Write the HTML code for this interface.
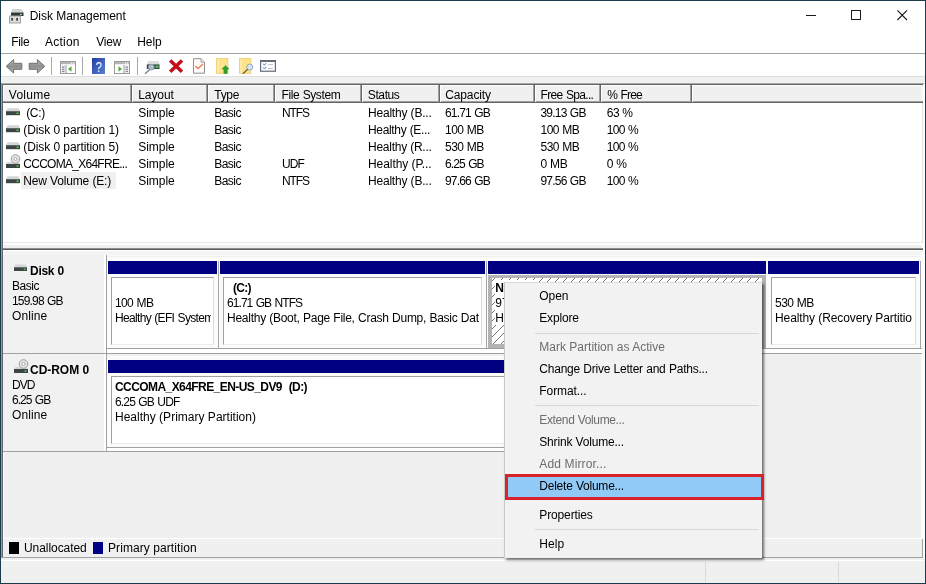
<!DOCTYPE html>
<html lang="en">
<head>
<meta charset="utf-8">
<title>Disk Management</title>
<style>
html,body{margin:0;padding:0;}
body{width:926px;height:584px;overflow:hidden;background:#fff;font-family:"Liberation Sans",sans-serif;font-size:12px;color:#000;position:relative;}
.a{position:absolute;}
.t{position:absolute;white-space:pre;line-height:14px;height:14px;z-index:5;}
.b{font-weight:bold;}
.g{color:#6d6d6d;}
.m{z-index:30;}
</style>
</head>
<body>
<div class="a" style="left:0;top:0;width:926px;height:584px;box-sizing:border-box;border:1px solid #1c3b4c;background:#fff;"></div>
<svg class="a" style="left:8px;top:7.5px" width="18" height="16" viewBox="0 0 18 16">
 <polygon points="4.5,1 13.5,1 15.5,4.5 3,4.5" fill="#cfd3d5"/>
 <rect x="3" y="4.5" width="12.5" height="3.5" fill="#2b3a36"/>
 <rect x="12.3" y="5.8" width="1.4" height="1.2" fill="#fff"/>
 <rect x="1.5" y="8" width="11" height="7" fill="#dcdcdc" stroke="#a3a3a3" stroke-width="1"/>
 <rect x="3.3" y="10" width="1.6" height="2.6" fill="#2a2a2a"/>
 <rect x="8.3" y="10" width="1.6" height="2.6" fill="#2a2a2a"/>
</svg>
<div class="a" style="left:806px;top:15px;width:10px;height:1px;background:#1a1a1a;"></div>
<div class="a" style="left:851px;top:10px;width:8px;height:8px;border:1px solid #1a1a1a;box-sizing:content-box;"></div>
<svg class="a" style="left:897px;top:10px" width="11" height="11" viewBox="0 0 11 11"><path d="M0.4 0.4 L10 10 M10 0.4 L0.4 10" stroke="#1a1a1a" stroke-width="1.1" fill="none"/></svg>
<div class="a" style="left:1px;top:53px;width:924px;height:1px;background:#a3a3a3;"></div>
<div class="a" style="left:51px;top:57px;width:1px;height:18px;background:#a8a8a8;"></div>
<div class="a" style="left:82px;top:57px;width:1px;height:18px;background:#a8a8a8;"></div>
<div class="a" style="left:137px;top:57px;width:1px;height:18px;background:#a8a8a8;"></div>
<svg class="a" style="left:5px;top:58px" width="42" height="17" viewBox="0 0 42 17">
 <defs><linearGradient id="ga" x1="0" y1="0" x2="0" y2="1"><stop offset="0" stop-color="#b8b8b8"/><stop offset="0.5" stop-color="#8e8e8e"/><stop offset="1" stop-color="#b4b4b4"/></linearGradient></defs>
 <path d="M1.2 8.3 L8.6 1.6 L8.6 5.3 L16.8 5.3 L16.8 11.3 L8.6 11.3 L8.6 15 Z" fill="url(#ga)" stroke="#707070" stroke-width="1" stroke-linejoin="round"/>
 <path d="M39.8 8.3 L32.4 1.6 L32.4 5.3 L24.2 5.3 L24.2 11.3 L32.4 11.3 L32.4 15 Z" fill="url(#ga)" stroke="#707070" stroke-width="1" stroke-linejoin="round"/>
</svg>
<svg class="a" style="left:60px;top:61px" width="16" height="13" viewBox="0 0 16 13">
 <rect x="0.5" y="0.5" width="15" height="12" fill="#fdfdfd" stroke="#9a9a9a"/>
 <rect x="1" y="1" width="14" height="2.2" fill="#b5b5b5"/>
 <rect x="11" y="1.5" width="1.2" height="1.2" fill="#fff"/><rect x="13" y="1.5" width="1.2" height="1.2" fill="#fff"/>
 <rect x="1" y="4" width="4.5" height="8" fill="#f3f4f6"/>
 <rect x="2" y="5.5" width="2.5" height="1.2" fill="#7a8696"/><rect x="2" y="7.7" width="2.5" height="1.2" fill="#7a8696"/><rect x="2" y="9.9" width="2.5" height="1.2" fill="#7a8696"/>
 <rect x="5.5" y="4" width="1" height="8" fill="#9a9a9a"/>
 <polygon points="8,8 11.5,5.3 11.5,10.7" fill="#4faa3a"/>
</svg>
<svg class="a" style="left:92px;top:58px" width="13" height="16" viewBox="0 0 13 16">
 <defs><linearGradient id="gh" x1="0" y1="0" x2="1" y2="1"><stop offset="0" stop-color="#1f3f9e"/><stop offset="1" stop-color="#5d7fd6"/></linearGradient></defs>
 <rect x="0" y="0" width="13" height="16" fill="url(#gh)"/>
 <text x="6.6" y="13.6" font-family="Liberation Sans, sans-serif" font-size="15.5" fill="#fff" text-anchor="middle" textLength="6.4" lengthAdjust="spacingAndGlyphs">?</text>
</svg>
<svg class="a" style="left:114px;top:61px" width="16" height="13" viewBox="0 0 16 13">
 <rect x="0.5" y="0.5" width="15" height="12" fill="#fdfdfd" stroke="#9a9a9a"/>
 <rect x="1" y="1" width="14" height="2.2" fill="#b5b5b5"/>
 <rect x="11" y="1.5" width="1.2" height="1.2" fill="#fff"/><rect x="13" y="1.5" width="1.2" height="1.2" fill="#fff"/>
 <rect x="10.5" y="4" width="4.5" height="8" fill="#f3f4f6"/>
 <rect x="11.5" y="5.5" width="2.5" height="1.2" fill="#7a8696"/><rect x="11.5" y="7.7" width="2.5" height="1.2" fill="#7a8696"/><rect x="11.5" y="9.9" width="2.5" height="1.2" fill="#7a8696"/>
 <rect x="9.5" y="4" width="1" height="8" fill="#9a9a9a"/>
 <polygon points="8,8 4.5,5.3 4.5,10.7" fill="#4faa3a"/>
</svg>
<svg class="a" style="left:144px;top:60px" width="18" height="15" viewBox="0 0 18 15">
 <polygon points="4.2,1 14.8,1 15.5,4.4 2.8,4.4" fill="#d9dddd"/>
 <rect x="2.8" y="4.4" width="12.7" height="4.6" fill="#2f473c"/>
 <rect x="4.5" y="5.8" width="1.6" height="1.8" fill="#cfd6d6"/><rect x="7.4" y="5.8" width="1.6" height="1.8" fill="#cfd6d6"/>
 <rect x="11.3" y="5.6" width="3.3" height="2.2" fill="#3fae46"/><rect x="12.5" y="6.2" width="1" height="1" fill="#e8ffe8"/>
 <circle cx="7.3" cy="7.2" r="2.9" fill="#b9ccd9" fill-opacity="0.85" stroke="#8496a4" stroke-width="0.9"/>
 <path d="M5.4 9.8 L1.4 13.4" stroke="#76858f" stroke-width="1.4" stroke-linecap="round"/>
</svg>
<svg class="a" style="left:168px;top:59px" width="16" height="15" viewBox="0 0 16 15">
 <path d="M2.2 1.6 L14 12.8 M14 1.6 L2.2 12.8" stroke="#c30f1a" stroke-width="3.5" stroke-linecap="butt"/>
</svg>
<svg class="a" style="left:192px;top:58px" width="14" height="17" viewBox="0 0 14 17">
 <path d="M1.5 0.7 L9 0.7 L12.5 4.2 L12.5 15.2 L1.5 15.2 Z" fill="#fffaf8" stroke="#8e8e8e" stroke-width="1"/>
 <path d="M9 0.7 L9 4.2 L12.5 4.2" fill="#ececec" stroke="#8e8e8e" stroke-width="0.8"/>
 <path d="M3.4 8 L6 10.5 L11 6" fill="none" stroke="#e57f55" stroke-width="1.4"/>
</svg>
<svg class="a" style="left:216px;top:58px" width="15" height="17" viewBox="0 0 15 17">
 <rect x="0.5" y="0.5" width="11.3" height="14.8" fill="#fde38c" stroke="#eed27c" stroke-width="1"/>
 <rect x="1" y="1" width="2" height="13.8" fill="#fdeaa8"/>
 <path d="M9.5 7.4 L13 11 L11.2 11 L11.2 15.4 L7.9 15.4 L7.9 11 L6 11 Z" fill="#2fa32b" stroke="#238a21" stroke-width="0.5"/>
</svg>
<svg class="a" style="left:239px;top:58px" width="16" height="17" viewBox="0 0 16 17">
 <rect x="0.5" y="0.5" width="11.3" height="14.8" fill="#fde38c" stroke="#eed27c" stroke-width="1"/>
 <rect x="1" y="1" width="2" height="13.8" fill="#fdeaa8"/>
 <circle cx="10.7" cy="9.1" r="3" fill="#d6e5f0" stroke="#98a8b8" stroke-width="1"/>
 <path d="M8.4 11.6 L4.2 15.4" stroke="#6c6048" stroke-width="1.3" stroke-linecap="round"/>
</svg>
<svg class="a" style="left:260px;top:60px" width="17" height="13" viewBox="0 0 17 13">
 <rect x="0.6" y="0.6" width="14.8" height="10.6" fill="#fff" stroke="#606a78" stroke-width="1.2"/>
 <rect x="0" y="0" width="16" height="2" fill="#606a78"/>
 <path d="M3.2 3.6 L4.4 5.2 L6 3.2" fill="none" stroke="#3a7ac8" stroke-width="1"/>
 <path d="M3.2 7.4 L4.4 9 L6 7" fill="none" stroke="#3a7ac8" stroke-width="1"/>
 <rect x="8" y="4.2" width="5" height="0.9" fill="#b0b8c0"/><rect x="8" y="8" width="5" height="0.9" fill="#b0b8c0"/>
</svg>
<div class="a" style="left:1px;top:76px;width:924px;height:1px;background:#dedede;"></div>
<div class="a" style="left:1px;top:77px;width:924px;height:7px;background:#f0f0f0;"></div>
<div class="a" style="left:1px;top:83px;width:923px;height:1px;background:#a9a9a9;"></div>
<div class="a" style="left:1px;top:83px;width:1px;height:475px;background:#8a9dab;"></div>
<div class="a" style="left:2px;top:84px;width:921px;height:1px;background:#646464;"></div>
<div class="a" style="left:2px;top:84px;width:1px;height:474px;background:#60686d;"></div>
<div class="a" style="left:3px;top:85px;width:919px;height:160px;background:#ffffff;"></div>
<div class="a" style="left:3px;top:242px;width:919px;height:1px;background:#e8e8e8;"></div>
<div class="a" style="left:922px;top:85px;width:1px;height:158px;background:#e3e3e3;"></div>
<div class="a" style="left:923px;top:84px;width:2px;height:474px;background:#ffffff;"></div>
<div class="a" style="left:3px;top:85px;width:919px;height:1px;background:#ffffff;"></div>
<div class="a" style="left:3px;top:86px;width:919px;height:15px;background:#f0f0f0;"></div>
<div class="a" style="left:3px;top:85px;width:1px;height:17px;background:#ffffff;"></div>
<div class="a" style="left:3px;top:101px;width:920px;height:1px;background:#a0a0a0;"></div>
<div class="a" style="left:3px;top:102px;width:920px;height:1px;background:#646464;"></div>
<div class="a" style="left:130px;top:85px;width:1px;height:17px;background:#a0a0a0;"></div>
<div class="a" style="left:131px;top:85px;width:1px;height:17px;background:#696969;"></div>
<div class="a" style="left:132px;top:85px;width:1px;height:17px;background:#ffffff;"></div>
<div class="a" style="left:206px;top:85px;width:1px;height:17px;background:#a0a0a0;"></div>
<div class="a" style="left:207px;top:85px;width:1px;height:17px;background:#696969;"></div>
<div class="a" style="left:208px;top:85px;width:1px;height:17px;background:#ffffff;"></div>
<div class="a" style="left:273px;top:85px;width:1px;height:17px;background:#a0a0a0;"></div>
<div class="a" style="left:274px;top:85px;width:1px;height:17px;background:#696969;"></div>
<div class="a" style="left:275px;top:85px;width:1px;height:17px;background:#ffffff;"></div>
<div class="a" style="left:360px;top:85px;width:1px;height:17px;background:#a0a0a0;"></div>
<div class="a" style="left:361px;top:85px;width:1px;height:17px;background:#696969;"></div>
<div class="a" style="left:362px;top:85px;width:1px;height:17px;background:#ffffff;"></div>
<div class="a" style="left:438px;top:85px;width:1px;height:17px;background:#a0a0a0;"></div>
<div class="a" style="left:439px;top:85px;width:1px;height:17px;background:#696969;"></div>
<div class="a" style="left:440px;top:85px;width:1px;height:17px;background:#ffffff;"></div>
<div class="a" style="left:533px;top:85px;width:1px;height:17px;background:#a0a0a0;"></div>
<div class="a" style="left:534px;top:85px;width:1px;height:17px;background:#696969;"></div>
<div class="a" style="left:535px;top:85px;width:1px;height:17px;background:#ffffff;"></div>
<div class="a" style="left:599px;top:85px;width:1px;height:17px;background:#a0a0a0;"></div>
<div class="a" style="left:600px;top:85px;width:1px;height:17px;background:#696969;"></div>
<div class="a" style="left:601px;top:85px;width:1px;height:17px;background:#ffffff;"></div>
<div class="a" style="left:690px;top:85px;width:1px;height:17px;background:#a0a0a0;"></div>
<div class="a" style="left:691px;top:85px;width:1px;height:17px;background:#696969;"></div>
<div class="a" style="left:692px;top:85px;width:1px;height:17px;background:#ffffff;"></div>
<div class="a" style="left:921px;top:86px;width:2px;height:15px;background:#f7f7f7;"></div>
<div class="a" style="left:21px;top:172px;width:95px;height:17px;background:#f0f0f0;"></div>
<svg class="a" style="left:6px;top:108px" width="14" height="8" viewBox="0 0 14 8">
 <polygon points="1.5,0.3 12.5,0.3 14,3.2 0,3.2" fill="#d3d6d8"/>
 <rect x="0" y="3.2" width="14" height="4" fill="#3b4644"/>
 <rect x="10.5" y="4.5" width="2" height="1.5" fill="#50d050"/>
</svg>
<svg class="a" style="left:6px;top:125px" width="14" height="8" viewBox="0 0 14 8">
 <polygon points="1.5,0.3 12.5,0.3 14,3.2 0,3.2" fill="#d3d6d8"/>
 <rect x="0" y="3.2" width="14" height="4" fill="#3b4644"/>
 <rect x="10.5" y="4.5" width="2" height="1.5" fill="#50d050"/>
</svg>
<svg class="a" style="left:6px;top:142px" width="14" height="8" viewBox="0 0 14 8">
 <polygon points="1.5,0.3 12.5,0.3 14,3.2 0,3.2" fill="#d3d6d8"/>
 <rect x="0" y="3.2" width="14" height="4" fill="#3b4644"/>
 <rect x="10.5" y="4.5" width="2" height="1.5" fill="#50d050"/>
</svg>
<svg class="a" style="left:6px;top:154px" width="15" height="15" viewBox="0 0 15 15">
 <polygon points="1.5,8 12.5,8 14,10 0,10" fill="#d3d6d8"/>
 <rect x="0" y="10" width="14" height="4" fill="#3b4644"/>
 <rect x="10.5" y="11.3" width="2" height="1.4" fill="#50d050"/>
 <circle cx="9.5" cy="5" r="4.3" fill="#e4e4e4" stroke="#9c9c9c" stroke-width="1"/>
 <circle cx="9.5" cy="5" r="1.5" fill="#fff" stroke="#9c9c9c" stroke-width="0.8"/>
</svg>
<svg class="a" style="left:6px;top:176px" width="14" height="8" viewBox="0 0 14 8">
 <polygon points="1.5,0.3 12.5,0.3 14,3.2 0,3.2" fill="#d3d6d8"/>
 <rect x="0" y="3.2" width="14" height="4" fill="#3b4644"/>
 <rect x="10.5" y="4.5" width="2" height="1.5" fill="#50d050"/>
</svg>
<div class="a" style="left:4px;top:245px;width:918px;height:3px;background:#f0f0f0;"></div>
<div class="a" style="left:3px;top:248px;width:920px;height:1px;background:#909090;"></div>
<div class="a" style="left:3px;top:249px;width:920px;height:1px;background:#5a5a5a;"></div>
<div class="a" style="left:3px;top:250px;width:919px;height:308px;background:#ffffff;"></div>
<div class="a" style="left:4px;top:251px;width:917px;height:306px;background:#f0f0f0;"></div>
<div class="a" style="left:4px;top:251px;width:917px;height:4px;background:#f4f4f4;"></div>
<div class="a" style="left:4px;top:255px;width:917px;height:1px;background:#fafafa;"></div>
<div class="a" style="left:921px;top:250px;width:3px;height:308px;background:#fbfbfb;"></div>
<div class="a" style="left:2px;top:557px;width:921px;height:1px;background:#a0a0a0;"></div>
<div class="a" style="left:3px;top:255px;width:101px;height:98px;background:#f1f1f1;"></div>
<div class="a" style="left:104px;top:255px;width:2px;height:98px;background:#ffffff;"></div>
<div class="a" style="left:106px;top:255px;width:1px;height:98px;background:#a0a0a0;"></div>
<div class="a" style="left:3px;top:353px;width:104px;height:1px;background:#a0a0a0;"></div>
<div class="a" style="left:107px;top:257px;width:814px;height:92px;background:#fbfbfb;"></div>
<div class="a" style="left:108px;top:261px;width:109px;height:13px;background:#000080;"></div>
<div class="a" style="left:108px;top:274px;width:109px;height:74px;background:#fbfbfb;"></div>
<div class="a" style="left:111px;top:277px;width:103px;height:68px;background:#fff;border:1px solid #a0a0a0;border-right-color:#dcdcdc;border-bottom-color:#ececec;box-sizing:border-box;"></div>
<div class="a" style="left:218px;top:261px;width:1px;height:87px;background:#a6a6a6;"></div>
<div class="a" style="left:220px;top:261px;width:265px;height:13px;background:#000080;"></div>
<div class="a" style="left:220px;top:274px;width:265px;height:74px;background:#fbfbfb;"></div>
<div class="a" style="left:223px;top:277px;width:259px;height:68px;background:#fff;border:1px solid #a0a0a0;border-right-color:#dcdcdc;border-bottom-color:#ececec;box-sizing:border-box;"></div>
<div class="a" style="left:486px;top:261px;width:1px;height:87px;background:#a6a6a6;"></div>
<div class="a" style="left:488px;top:261px;width:278px;height:13px;background:#000080;"></div>
<div class="a" style="left:488px;top:274px;width:278px;height:74px;background:#fbfbfb;"></div>
<div class="a" style="left:488px;top:275px;width:278px;height:73px;background:#fff;border:4px solid #b3b3b3;border-top-width:3px;box-sizing:border-box;"></div>
<svg class="a" style="left:492px;top:278px" width="270" height="66"><defs><pattern id="hat" width="8" height="8" patternUnits="userSpaceOnUse"><path d="M-1 4 L4 -1 M2 9 L9 2" stroke="#4a4a4a" stroke-width="0.75"/></pattern></defs><rect width="100%" height="100%" fill="url(#hat)"/></svg>
<div class="a" style="left:494.5px;top:280px;width:40px;height:45px;background:#ffffff;"></div>
<div class="a" style="left:768px;top:261px;width:151px;height:13px;background:#000080;"></div>
<div class="a" style="left:768px;top:274px;width:151px;height:74px;background:#fbfbfb;"></div>
<div class="a" style="left:771px;top:277px;width:145px;height:68px;background:#fff;border:1px solid #a0a0a0;border-right-color:#dcdcdc;border-bottom-color:#ececec;box-sizing:border-box;"></div>
<div class="a" style="left:920px;top:261px;width:1px;height:87px;background:#a6a6a6;"></div>
<div class="a" style="left:107px;top:348px;width:815px;height:1px;background:#a0a0a0;"></div>
<div class="a" style="left:107px;top:349px;width:815px;height:4px;background:#ffffff;"></div>
<div class="a" style="left:107px;top:353px;width:815px;height:1px;background:#a0a0a0;"></div>
<svg class="a" style="left:14.3px;top:264.3px" width="13" height="8" viewBox="0 0 14 8">
 <polygon points="1.5,0.3 12.5,0.3 14,3.2 0,3.2" fill="#d3d6d8"/>
 <rect x="0" y="3.2" width="14" height="4" fill="#3b4644"/>
 <rect x="10.5" y="4.5" width="2" height="1.5" fill="#50d050"/>
</svg>
<div class="a" style="left:3px;top:354px;width:101px;height:97px;background:#f1f1f1;"></div>
<div class="a" style="left:104px;top:354px;width:2px;height:97px;background:#ffffff;"></div>
<div class="a" style="left:106px;top:354px;width:1px;height:97px;background:#a0a0a0;"></div>
<div class="a" style="left:3px;top:451px;width:104px;height:1px;background:#a0a0a0;"></div>
<div class="a" style="left:107px;top:356px;width:652px;height:92px;background:#fbfbfb;"></div>
<div class="a" style="left:108px;top:360px;width:650px;height:13px;background:#000080;"></div>
<div class="a" style="left:108px;top:373px;width:650px;height:74px;background:#fbfbfb;"></div>
<div class="a" style="left:111px;top:376px;width:644px;height:68px;background:#fff;border:1px solid #a0a0a0;border-right-color:#dcdcdc;border-bottom-color:#ececec;box-sizing:border-box;"></div>
<div class="a" style="left:759px;top:360px;width:1px;height:87px;background:#a6a6a6;"></div>
<div class="a" style="left:107px;top:447px;width:652px;height:1px;background:#a0a0a0;"></div>
<div class="a" style="left:107px;top:448px;width:652px;height:3px;background:#ffffff;"></div>
<div class="a" style="left:107px;top:451px;width:652px;height:1px;background:#a0a0a0;"></div>
<svg class="a" style="left:14px;top:359px" width="15" height="15" viewBox="0 0 15 15">
 <polygon points="1.5,8 12.5,8 14,10 0,10" fill="#d3d6d8"/>
 <rect x="0" y="10" width="14" height="4" fill="#3b4644"/>
 <rect x="10.5" y="11.3" width="2" height="1.4" fill="#50d050"/>
 <circle cx="9.5" cy="5" r="4.3" fill="#e4e4e4" stroke="#9c9c9c" stroke-width="1"/>
 <circle cx="9.5" cy="5" r="1.5" fill="#fff" stroke="#9c9c9c" stroke-width="0.8"/>
</svg>
<div class="a" style="left:4px;top:538px;width:919px;height:1px;background:#ffffff;"></div>
<div class="a" style="left:922px;top:539px;width:1px;height:19px;background:#a0a0a0;"></div>
<div class="a" style="left:3px;top:539px;width:919px;height:18px;background:#f0f0f0;"></div>
<div class="a" style="left:8.7px;top:541.5px;width:10.6px;height:12.3px;background:#000000;"></div>
<div class="a" style="left:92.5px;top:541.5px;width:10.6px;height:12.3px;background:#000084;"></div>
<div class="a" style="left:1px;top:558px;width:924px;height:25px;background:#f0f0f0;"></div>
<div class="a" style="left:1px;top:560px;width:924px;height:1px;background:#ffffff;"></div>
<div class="a" style="left:705px;top:562px;width:1px;height:20px;background:#d7d7d7;"></div>
<div class="a" style="left:838px;top:562px;width:1px;height:20px;background:#d7d7d7;"></div>
<div class="a" style="left:504px;top:282px;width:258px;height:276px;background:#f2f2f2;border:1px solid #c8c8c8;border-top-color:#dcdcdc;border-right:none;border-bottom:none;box-sizing:border-box;z-index:20;box-shadow:1.5px 1.5px 2.5px rgba(0,0,0,0.55);"></div>
<div class="a" style="left:535px;top:333px;width:224px;height:1px;background:#d7d7d7;z-index:25;"></div>
<div class="a" style="left:535px;top:405px;width:224px;height:1px;background:#d7d7d7;z-index:25;"></div>
<div class="a" style="left:505px;top:474px;width:259px;height:26px;background:#91c9f7;border:3.5px solid #d8232a;box-sizing:border-box;z-index:25;"></div>
<div class="a" style="left:535px;top:529px;width:224px;height:1px;background:#d7d7d7;z-index:25;"></div>
<div id="txt" style="position:absolute;left:0;top:0;width:926px;height:584px;will-change:transform;z-index:40;">
<div class="t" style="left:29.7px;top:9px;letter-spacing:-0.044px;word-spacing:0.044px;">Disk Management</div>
<div class="t" style="left:11.2px;top:35px;letter-spacing:-0.286px;word-spacing:0.286px;">File</div>
<div class="t" style="left:45px;top:35px;letter-spacing:0.223px;word-spacing:-0.223px;">Action</div>
<div class="t" style="left:96.2px;top:35px;letter-spacing:-0.199px;word-spacing:0.199px;">View</div>
<div class="t" style="left:137.2px;top:35px;letter-spacing:-0.047px;word-spacing:0.047px;">Help</div>
<div class="t" style="left:8.8px;top:88px;letter-spacing:0.278px;word-spacing:-0.278px;">Volume</div>
<div class="t" style="left:138.2px;top:88px;letter-spacing:-0.055px;word-spacing:0.055px;">Layout</div>
<div class="t" style="left:214.3px;top:88px;letter-spacing:-0.329px;word-spacing:0.329px;">Type</div>
<div class="t" style="left:281.6px;top:88px;letter-spacing:-0.399px;word-spacing:0.399px;">File System</div>
<div class="t" style="left:367.8px;top:88px;letter-spacing:-0.389px;word-spacing:0.389px;">Status</div>
<div class="t" style="left:445.2px;top:88px;letter-spacing:-0.123px;word-spacing:0.123px;">Capacity</div>
<div class="t" style="left:540.6px;top:88px;letter-spacing:-0.667px;word-spacing:0.667px;">Free Spa...</div>
<div class="t" style="left:607.2px;top:88px;letter-spacing:-0.797px;word-spacing:0.797px;">% Free</div>
<div class="t" style="left:26.2px;top:106px;letter-spacing:-0.325px;word-spacing:0.325px;">(C:)</div>
<div class="t" style="left:138.2px;top:106px;letter-spacing:-0.031px;word-spacing:0.031px;">Simple</div>
<div class="t" style="left:214.2px;top:106px;letter-spacing:-0.509px;word-spacing:0.509px;">Basic</div>
<div class="t" style="left:282px;top:106px;letter-spacing:-1.136px;word-spacing:1.136px;">NTFS</div>
<div class="t" style="left:368px;top:106px;letter-spacing:-0.203px;word-spacing:0.203px;">Healthy (B...</div>
<div class="t" style="left:445px;top:106px;letter-spacing:-0.829px;word-spacing:0.829px;">61.71 GB</div>
<div class="t" style="left:540.5px;top:106px;letter-spacing:-0.800px;word-spacing:0.800px;">39.13 GB</div>
<div class="t" style="left:606.8px;top:106px;letter-spacing:-0.553px;word-spacing:0.553px;">63 %</div>
<div class="t" style="left:23.3px;top:123px;letter-spacing:-0.099px;word-spacing:0.099px;">(Disk 0 partition 1)</div>
<div class="t" style="left:138.2px;top:123px;letter-spacing:-0.031px;word-spacing:0.031px;">Simple</div>
<div class="t" style="left:214.2px;top:123px;letter-spacing:-0.509px;word-spacing:0.509px;">Basic</div>
<div class="t" style="left:368px;top:123px;letter-spacing:-0.336px;word-spacing:0.336px;">Healthy (E...</div>
<div class="t" style="left:445px;top:123px;letter-spacing:-0.532px;word-spacing:0.532px;">100 MB</div>
<div class="t" style="left:540.5px;top:123px;letter-spacing:-0.532px;word-spacing:0.532px;">100 MB</div>
<div class="t" style="left:606.8px;top:123px;letter-spacing:-0.733px;word-spacing:0.733px;">100 %</div>
<div class="t" style="left:23.3px;top:140px;letter-spacing:-0.099px;word-spacing:0.099px;">(Disk 0 partition 5)</div>
<div class="t" style="left:138.2px;top:140px;letter-spacing:-0.031px;word-spacing:0.031px;">Simple</div>
<div class="t" style="left:214.2px;top:140px;letter-spacing:-0.509px;word-spacing:0.509px;">Basic</div>
<div class="t" style="left:368px;top:140px;letter-spacing:-0.257px;word-spacing:0.257px;">Healthy (R...</div>
<div class="t" style="left:445px;top:140px;letter-spacing:-0.532px;word-spacing:0.532px;">530 MB</div>
<div class="t" style="left:540.5px;top:140px;letter-spacing:-0.532px;word-spacing:0.532px;">530 MB</div>
<div class="t" style="left:606.8px;top:140px;letter-spacing:-0.733px;word-spacing:0.733px;">100 %</div>
<div class="t" style="left:23.3px;top:157px;letter-spacing:-0.729px;word-spacing:0.729px;">CCCOMA_X64FRE...</div>
<div class="t" style="left:138.2px;top:157px;letter-spacing:-0.031px;word-spacing:0.031px;">Simple</div>
<div class="t" style="left:214.2px;top:157px;letter-spacing:-0.509px;word-spacing:0.509px;">Basic</div>
<div class="t" style="left:282px;top:157px;letter-spacing:-0.957px;word-spacing:0.957px;">UDF</div>
<div class="t" style="left:368px;top:157px;letter-spacing:-0.074px;word-spacing:0.074px;">Healthy (P...</div>
<div class="t" style="left:445px;top:157px;letter-spacing:-0.889px;word-spacing:0.889px;">6.25 GB</div>
<div class="t" style="left:540.5px;top:157px;letter-spacing:-0.405px;word-spacing:0.405px;">0 MB</div>
<div class="t" style="left:606.8px;top:157px;letter-spacing:-0.494px;word-spacing:0.494px;">0 %</div>
<div class="t" style="left:23.3px;top:174px;letter-spacing:-0.179px;word-spacing:0.179px;">New Volume (E:)</div>
<div class="t" style="left:138.2px;top:174px;letter-spacing:-0.031px;word-spacing:0.031px;">Simple</div>
<div class="t" style="left:214.2px;top:174px;letter-spacing:-0.509px;word-spacing:0.509px;">Basic</div>
<div class="t" style="left:282px;top:174px;letter-spacing:-1.136px;word-spacing:1.136px;">NTFS</div>
<div class="t" style="left:368px;top:174px;letter-spacing:-0.203px;word-spacing:0.203px;">Healthy (B...</div>
<div class="t" style="left:445px;top:174px;letter-spacing:-0.829px;word-spacing:0.829px;">97.66 GB</div>
<div class="t" style="left:540.5px;top:174px;letter-spacing:-0.800px;word-spacing:0.800px;">97.56 GB</div>
<div class="t" style="left:606.8px;top:174px;letter-spacing:-0.733px;word-spacing:0.733px;">100 %</div>
<div class="t b" style="left:30px;top:264px;letter-spacing:-0.272px;word-spacing:0.272px;">Disk 0</div>
<div class="t" style="left:12px;top:279px;letter-spacing:-0.469px;word-spacing:0.469px;">Basic</div>
<div class="t" style="left:12px;top:294px;letter-spacing:-0.822px;word-spacing:0.822px;">159.98 GB</div>
<div class="t" style="left:12px;top:309px;letter-spacing:0.102px;word-spacing:-0.102px;">Online</div>
<div class="t" style="left:115px;top:295.5px;letter-spacing:-0.612px;word-spacing:0.612px;">100 MB</div>
<div class="t" style="left:115px;top:310.5px;width:95.5px;overflow:hidden;letter-spacing:-0.677px;word-spacing:0.677px;">Healthy (EFI System Partition)</div>
<div class="t b" style="left:233px;top:280.5px;letter-spacing:-0.739px;word-spacing:0.739px;">(C:)</div>
<div class="t" style="left:227px;top:295.5px;letter-spacing:-0.934px;word-spacing:0.934px;">61.71 GB NTFS</div>
<div class="t" style="left:227px;top:310.5px;width:252px;overflow:hidden;letter-spacing:-0.260px;word-spacing:0.260px;">Healthy (Boot, Page File, Crash Dump, Basic Data Partition)</div>
<div class="t b" style="left:495.3px;top:280.5px;width:9.1px;overflow:hidden;">New Volume  (E:)</div>
<div class="t" style="left:495.3px;top:295.5px;width:9.1px;overflow:hidden;">97.66 GB NTFS</div>
<div class="t" style="left:495.3px;top:310.5px;width:9.1px;overflow:hidden;">Healthy (Basic Data Partition)</div>
<div class="t" style="left:775px;top:295.5px;letter-spacing:-0.532px;word-spacing:0.532px;">530 MB</div>
<div class="t" style="left:775px;top:310.5px;width:136.8px;overflow:hidden;letter-spacing:-0.104px;word-spacing:0.104px;">Healthy (Recovery Partition)</div>
<div class="t b" style="left:30px;top:362.5px;letter-spacing:-0.035px;word-spacing:0.035px;">CD-ROM 0</div>
<div class="t" style="left:12px;top:378px;letter-spacing:-0.948px;word-spacing:0.948px;">DVD</div>
<div class="t" style="left:12px;top:393px;letter-spacing:-0.955px;word-spacing:0.955px;">6.25 GB</div>
<div class="t" style="left:12px;top:408px;letter-spacing:0.102px;word-spacing:-0.102px;">Online</div>
<div class="t b" style="left:115px;top:380px;letter-spacing:-0.569px;word-spacing:0.569px;">CCCOMA_X64FRE_EN-US_DV9  (D:)</div>
<div class="t" style="left:115px;top:395px;letter-spacing:-0.837px;word-spacing:0.837px;">6.25 GB UDF</div>
<div class="t" style="left:115px;top:410px;letter-spacing:0.012px;word-spacing:-0.012px;">Healthy (Primary Partition)</div>
<div class="t" style="left:24px;top:541px;letter-spacing:-0.061px;word-spacing:0.061px;">Unallocated</div>
<div class="t" style="left:108px;top:541px;letter-spacing:0.084px;word-spacing:-0.084px;">Primary partition</div>
<div class="t m" style="left:539.3px;top:289px;letter-spacing:-0.065px;word-spacing:0.065px;">Open</div>
<div class="t m" style="left:539.3px;top:311px;letter-spacing:-0.184px;word-spacing:0.184px;">Explore</div>
<div class="t m g" style="left:539.3px;top:340px;letter-spacing:0.010px;word-spacing:-0.010px;">Mark Partition as Active</div>
<div class="t m" style="left:539.3px;top:362px;letter-spacing:-0.224px;word-spacing:0.224px;">Change Drive Letter and Paths...</div>
<div class="t m" style="left:539.3px;top:384px;letter-spacing:-0.080px;word-spacing:0.080px;">Format...</div>
<div class="t m g" style="left:539.3px;top:413px;letter-spacing:-0.369px;word-spacing:0.369px;">Extend Volume...</div>
<div class="t m" style="left:539.3px;top:435px;letter-spacing:-0.185px;word-spacing:0.185px;">Shrink Volume...</div>
<div class="t m g" style="left:539.3px;top:457px;letter-spacing:0.162px;word-spacing:-0.162px;">Add Mirror...</div>
<div class="t m" style="left:539.3px;top:479px;letter-spacing:-0.231px;word-spacing:0.231px;">Delete Volume...</div>
<div class="t m" style="left:539.3px;top:508px;letter-spacing:-0.130px;word-spacing:0.130px;">Properties</div>
<div class="t m" style="left:539.3px;top:537px;letter-spacing:0.103px;word-spacing:-0.103px;">Help</div>
</div>
</body>
</html>
